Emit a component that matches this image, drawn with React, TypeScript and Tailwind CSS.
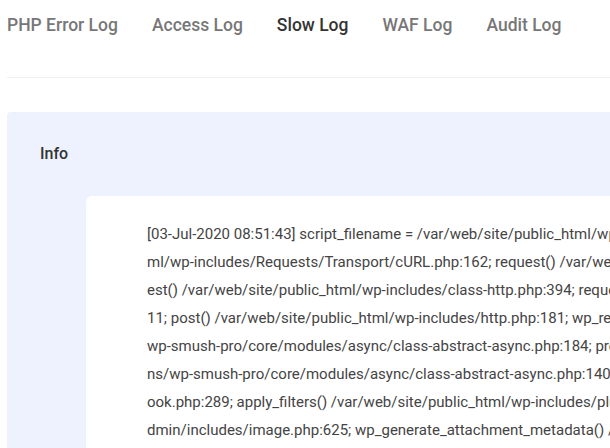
export default function App() {
  const tabs = ["PHP Error Log", "Access Log", "Slow Log", "WAF Log", "Audit Log"];
  const lines = [
    "[03-Jul-2020 08:51:43] script_filename = /var/web/site/public_html/wp-admin/async-upload.php",
    "ml/wp-includes/Requests/Transport/cURL.php:162; request() /var/web/site/public_html/wp-includes",
    "est() /var/web/site/public_html/wp-includes/class-http.php:394; request() /var/web/site/public",
    "11; post() /var/web/site/public_html/wp-includes/http.php:181; wp_remote_post() /var/web/site",
    "wp-smush-pro/core/modules/async/class-abstract-async.php:184; process_request() /var/web/site",
    "ns/wp-smush-pro/core/modules/async/class-abstract-async.php:140; launch() /var/web/site/public",
    "ook.php:289; apply_filters() /var/web/site/public_html/wp-includes/plugin.php:206; wp_generate",
    "dmin/includes/image.php:625; wp_generate_attachment_metadata() /var/web/site/public_html/wp",
  ];
  return (
    <div className="w-[610px] h-[448px] overflow-hidden bg-white" style={{ fontFamily: "Roboto, sans-serif" }}>
      <div className="ml-[7px] flex gap-[34px] pt-[14px] h-[78px] border-b border-[#f0f0f0]">
        {tabs.map((t) => (
          <div key={t} className={`text-[17.5px] font-medium leading-[22px] whitespace-nowrap ${t === "Slow Log" ? "text-[#333333]" : "text-[#777777]"}`}>{t}</div>
        ))}
      </div>
      <div className="ml-[7px] mt-[34px] bg-[#eef2fe] rounded-tl-[4px] h-[400px] pt-[32px]">
        <div className="pl-[33px] text-[16px] font-medium text-[#333333] leading-[20px]">Info</div>
        <div className="ml-[79px] mt-[32px] bg-white rounded-tl-[6px] h-[300px] pl-[61px] pt-[24px] overflow-hidden">
          {lines.map((l) => (
            <div key={l} className="text-[15px] leading-[28px] text-[#444444] whitespace-nowrap">{l}</div>
          ))}
        </div>
      </div>
    </div>
  );
}
